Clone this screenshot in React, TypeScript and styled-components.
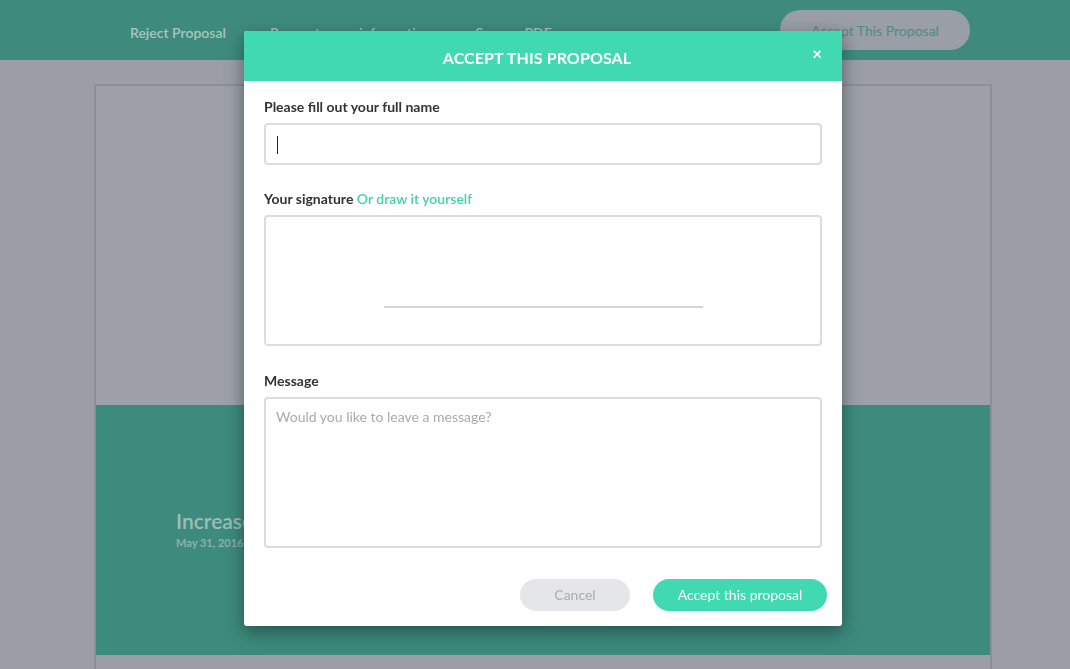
import React from 'react';
import styled, { createGlobalStyle } from 'styled-components';

const GlobalStyle = createGlobalStyle`
  html, body {
    margin: 0;
    padding: 0;
    height: 100%;
    overflow: hidden;
    background: #9b9ea7;
    font-family: Lato, 'Open Sans', Arial, sans-serif;
  }
`;

const Page = styled.div`
  width: 100%;
  height: 669px;
  background: #9b9ea7;
`;

const TopBar = styled.header`
  height: 60px;
  background: #3e8b7d;
  display: flex;
  align-items: center;
  padding: 0 100px 0 130px;
  box-sizing: border-box;
`;

const NavLink = styled.span`
  color: #a6c6bf;
  font-size: 14px;
  font-weight: 600;
  margin-right: 44px;
  padding-top: 4px;
`;

const Spacer = styled.div`
  flex: 1;
`;

const GhostPill = styled.span`
  width: 190px;
  height: 40px;
  border-radius: 20px;
  background: #9a9ea6;
  color: #4b8e84;
  font-size: 14px;
  display: flex;
  align-items: center;
  justify-content: center;
`;

const Sheet = styled.main`
  margin: 24px 78px 0 94px;
  border: 2px solid #8c8f97;
  border-bottom: none;
  height: 600px;
  display: flex;
  flex-direction: column;
`;

const SheetTop = styled.div`
  height: 319px;
  background: #9da0a8;
`;

const Hero = styled.section`
  height: 250px;
  background: #3d8b7d;
  padding: 0 0 4px 80px;
  display: flex;
  flex-direction: column;
  justify-content: center;
  gap: 3px;
  box-sizing: border-box;
`;

const HeroTitle = styled.div`
  color: #9fbdb6;
  font-size: 21px;
  font-weight: 600;
`;

const HeroDate = styled.div`
  color: #8fb1aa;
  font-size: 11px;
  font-weight: 700;
`;

const Modal = styled.div`
  position: fixed;
  left: 244px;
  top: 31px;
  width: 598px;
  height: 595px;
  background: #fff;
  border-radius: 3px;
  overflow: hidden;
  box-shadow: 0 6px 18px rgba(20, 40, 40, 0.55);
  display: flex;
  flex-direction: column;
`;

const ModalHead = styled.div`
  height: 50px;
  background: #40d9b1;
  color: #fff;
  display: flex;
  align-items: center;
  justify-content: center;
  position: relative;
`;

const ModalTitle = styled.h2`
  margin: 0 0 0 -12px;
  font-size: 16px;
  font-weight: 700;
  letter-spacing: 0.1px;
  padding-top: 2px;
`;

const Close = styled.span`
  position: absolute;
  right: 20px;
  top: 14px;
  font-size: 17px;
  font-weight: 700;
  line-height: 18px;
`;

const ModalBody = styled.div`
  padding: 17px 20px 0 20px;
  display: flex;
  flex-direction: column;
`;

const Label = styled.label<{ $gap?: number }>`
  font-size: 14px;
  font-weight: 700;
  color: #333;
  margin: ${({ $gap }) => $gap ?? 0}px 0 8px;
  line-height: 17px;
`;

const Link = styled.span`
  color: #3fd2ad;
  font-weight: 600;
`;

const Field = styled.div<{ $h: number }>`
  height: ${({ $h }) => $h}px;
  border: 2px solid #dcdcdc;
  border-radius: 4px;
  box-sizing: border-box;
  position: relative;
  display: flex;
`;

const Caret = styled.span`
  width: 1px;
  height: 18px;
  background: #222;
  margin: 11px 0 0 11px;
`;

const SignLine = styled.div`
  width: 319px;
  height: 2px;
  background: #d6d6d6;
  margin: 89px auto 0;
`;

const Placeholder = styled.span`
  color: #aaa;
  font-size: 14px;
  padding: 9px 0 0 10px;
`;

const Footer = styled.div`
  display: flex;
  justify-content: flex-end;
  gap: 23px;
  padding: 31px 15px 0 0;
`;

const Button = styled.button<{ $primary?: boolean }>`
  height: 32px;
  border: none;
  border-radius: 16px;
  font-family: inherit;
  font-size: 14px;
  padding: 0 0 2px;
  width: ${({ $primary }) => ($primary ? 174 : 110)}px;
  background: ${({ $primary }) => ($primary ? '#40d9b1' : '#e4e6e9')};
  color: ${({ $primary }) => ($primary ? '#fff' : '#a9abae')};
`;

export default function App() {
  return (
    <>
      <GlobalStyle />
      <Page>
        <TopBar>
          <NavLink>Reject Proposal</NavLink>
          <NavLink>Request more information</NavLink>
          <NavLink>Save as PDF</NavLink>
          <Spacer />
          <GhostPill>Accept This Proposal</GhostPill>
        </TopBar>
        <Sheet>
          <SheetTop />
          <Hero>
            <HeroTitle>Increase your sales</HeroTitle>
            <HeroDate>May 31, 2016</HeroDate>
          </Hero>
        </Sheet>
      </Page>
      <Modal>
        <ModalHead>
          <ModalTitle>ACCEPT THIS PROPOSAL</ModalTitle>
          <Close>×</Close>
        </ModalHead>
        <ModalBody>
          <Label>Please fill out your full name</Label>
          <Field $h={42}>
            <Caret />
          </Field>
          <Label $gap={25}>
            Your signature <Link>Or draw it yourself</Link>
          </Label>
          <Field $h={131}>
            <SignLine />
          </Field>
          <Label $gap={26}>Message</Label>
          <Field $h={151}>
            <Placeholder>Would you like to leave a message?</Placeholder>
          </Field>
        </ModalBody>
        <Footer>
          <Button>Cancel</Button>
          <Button $primary>Accept this proposal</Button>
        </Footer>
      </Modal>
    </>
  );
}
